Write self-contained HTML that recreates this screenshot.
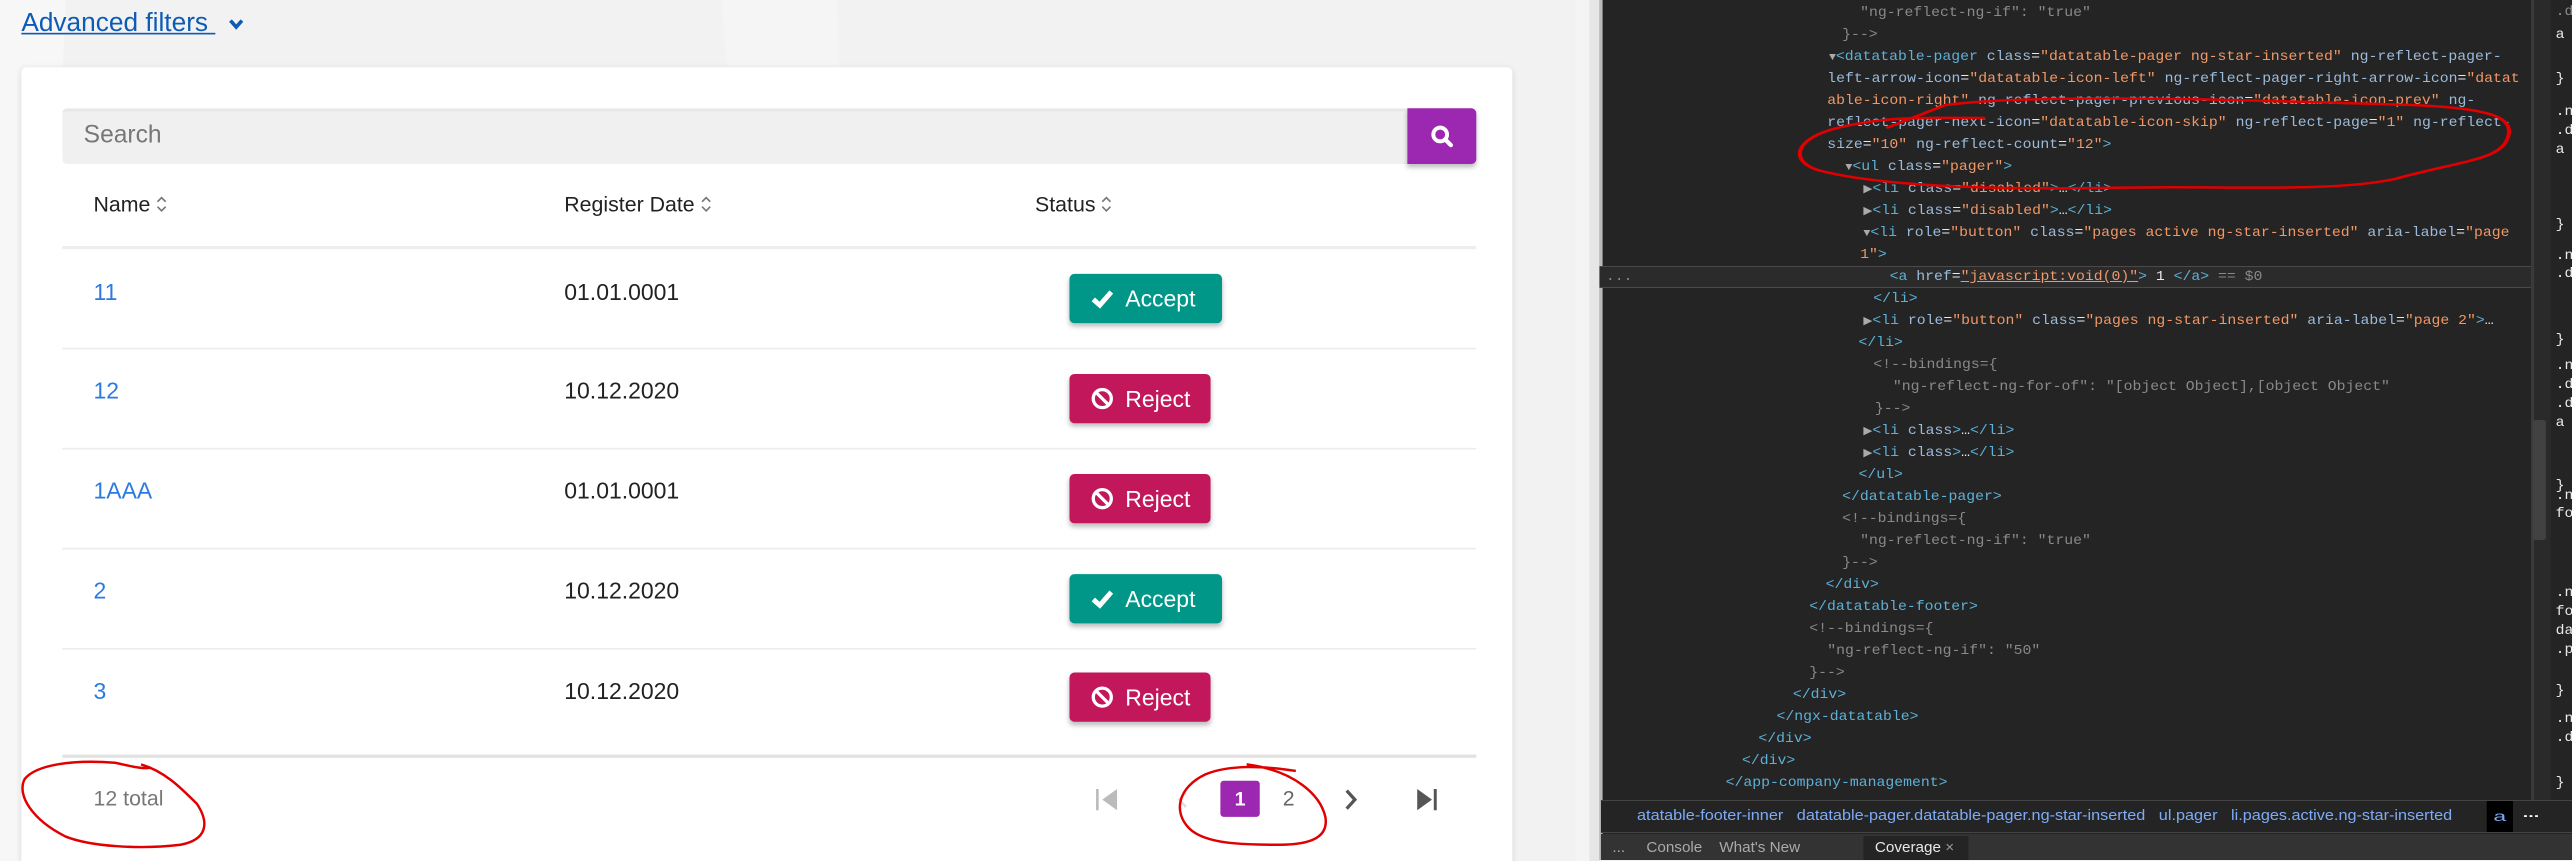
<!DOCTYPE html>
<html><head><meta charset="utf-8">
<style>
*{margin:0;padding:0;box-sizing:border-box}
html,body{width:2572px;height:860px;overflow:hidden;background:#f2f2f2}
#m{position:absolute;left:0;top:0;width:976px;height:525px;transform:scale(1.640306);transform-origin:0 0;font-family:"Liberation Sans",sans-serif;overflow:hidden}
#w{position:absolute;left:0;top:0;width:1568px;height:860px;transform:scaleX(1.640306);transform-origin:0 0;font-family:"Liberation Sans",sans-serif;overflow:hidden;pointer-events:none}
.abs{position:absolute}
.card{left:13px;top:41px;width:909px;height:500px;background:#fff;border-radius:3px;box-shadow:0 1px 4px rgba(0,0,0,.12)}
.hd{position:absolute;top:117px;font-size:13px;color:#222;white-space:nowrap}
.nm{position:absolute;left:57px;font-size:14px;color:#2a7ae2}
.dt{position:absolute;left:344px;font-size:14px;color:#222}
.ln{position:absolute;left:38px;width:862px;height:1px;background:#ececec}
.btn{position:absolute;left:652px;height:30px;border-radius:3px;color:#fff;font-size:14px;line-height:30px;padding-left:34px;box-shadow:0 2px 3px rgba(0,0,0,.25)}
.btn svg{position:absolute;left:13px;top:8px}
.acc{width:93px;background:#009688}
.rej{width:86px;background:#c2185b}
#dev{position:absolute;left:975px;top:0;width:593px;height:860px;background:#242424;overflow:hidden}
.dl{position:absolute;height:22px;line-height:22px;font-family:"Liberation Mono",monospace;font-size:14px;color:#e8eaed;white-space:nowrap;transform:scaleX(.644);transform-origin:0 0}
.t{color:#5db0d7}.a{color:#9bbbdc}.v{color:#f29766}.c{color:#898989}.g{color:#aaa;font-size:11px}
</style></head><body>
<div id="w">
<div id="dev">
<div class="abs" style="left:0;top:0;width:2px;height:860px;background:#bbb"></div>
<div class="abs" style="left:0;top:266px;width:570px;height:22px;background:#2b2b2b;border-top:1px solid #4a4a4a;border-bottom:1px solid #4a4a4a"></div>
<div class="abs" style="left:568px;top:0;width:2px;height:800px;background:#3a3a3a"></div>
<div class="abs" style="left:570px;top:0;width:10px;height:800px;background:#2a2a2a"></div>
<div class="abs" style="left:569px;top:420px;width:8px;height:120px;background:#424242;border-radius:2px"></div>
</div>
<div class="dl" style="top:2px;left:1134px"><span class="c">"ng-reflect-ng-if": "true"</span></div>
<div class="dl" style="top:24px;left:1123px"><span class="c">}--&gt;</span></div>
<div class="dl" style="top:46px;left:1115px"><span class="g">▼</span><span class="t">&lt;datatable-pager</span> <span class="a">class</span>=<span class="v">"datatable-pager ng-star-inserted"</span> <span class="a">ng-reflect-pager-</span></div>
<div class="dl" style="top:68px;left:1114px"><span class="a">left-arrow-icon</span>=<span class="v">"datatable-icon-left"</span> <span class="a">ng-reflect-pager-right-arrow-icon</span>=<span class="v">"datat</span></div>
<div class="dl" style="top:90px;left:1114px"><span class="v">able-icon-right"</span> <span class="a">ng-reflect-pager-previous-icon</span>=<span class="v">"datatable-icon-prev"</span> <span class="a">ng-</span></div>
<div class="dl" style="top:112px;left:1114px"><span class="a">reflect-pager-next-icon</span>=<span class="v">"datatable-icon-skip"</span> <span class="a">ng-reflect-page</span>=<span class="v">"1"</span> <span class="a">ng-reflect-</span></div>
<div class="dl" style="top:134px;left:1114px"><span class="a">size</span>=<span class="v">"10"</span> <span class="a">ng-reflect-count</span>=<span class="v">"12"</span><span class="t">&gt;</span></div>
<div class="dl" style="top:156px;left:1125px"><span class="g">▼</span><span class="t">&lt;ul</span> <span class="a">class</span>=<span class="v">"pager"</span><span class="t">&gt;</span></div>
<div class="dl" style="top:178px;left:1136px"><span class="g">▶</span><span class="t">&lt;li</span> <span class="a">class</span>=<span class="v">"disabled"</span><span class="t">&gt;</span>…<span class="t">&lt;/li&gt;</span></div>
<div class="dl" style="top:200px;left:1136px"><span class="g">▶</span><span class="t">&lt;li</span> <span class="a">class</span>=<span class="v">"disabled"</span><span class="t">&gt;</span>…<span class="t">&lt;/li&gt;</span></div>
<div class="dl" style="top:222px;left:1136px"><span class="g">▼</span><span class="t">&lt;li</span> <span class="a">role</span>=<span class="v">"button"</span> <span class="a">class</span>=<span class="v">"pages active ng-star-inserted"</span> <span class="a">aria-label</span>=<span class="v">"page</span></div>
<div class="dl" style="top:244px;left:1134px"><span class="v">1"</span><span class="t">&gt;</span></div>
<div class="dl" style="top:266px;left:979px"><span class="c">...</span></div>
<div class="dl" style="top:266px;left:1152px"><span class="t">&lt;a</span> <span class="a">href</span>=<span class="v" style="text-decoration:underline">"javascript:void(0)"</span><span class="t">&gt;</span> 1 <span class="t">&lt;/a&gt;</span> <span class="c">== $0</span></div>
<div class="dl" style="top:288px;left:1142px"><span class="t">&lt;/li&gt;</span></div>
<div class="dl" style="top:310px;left:1136px"><span class="g">▶</span><span class="t">&lt;li</span> <span class="a">role</span>=<span class="v">"button"</span> <span class="a">class</span>=<span class="v">"pages ng-star-inserted"</span> <span class="a">aria-label</span>=<span class="v">"page 2"</span><span class="t">&gt;</span>…</div>
<div class="dl" style="top:332px;left:1133px"><span class="t">&lt;/li&gt;</span></div>
<div class="dl" style="top:354px;left:1142px"><span class="c">&lt;!--bindings={</span></div>
<div class="dl" style="top:376px;left:1154px"><span class="c">"ng-reflect-ng-for-of": "[object Object],[object Object"</span></div>
<div class="dl" style="top:398px;left:1143px"><span class="c">}--&gt;</span></div>
<div class="dl" style="top:420px;left:1136px"><span class="g">▶</span><span class="t">&lt;li</span> <span class="a">class</span><span class="t">&gt;</span>…<span class="t">&lt;/li&gt;</span></div>
<div class="dl" style="top:442px;left:1136px"><span class="g">▶</span><span class="t">&lt;li</span> <span class="a">class</span><span class="t">&gt;</span>…<span class="t">&lt;/li&gt;</span></div>
<div class="dl" style="top:464px;left:1133px"><span class="t">&lt;/ul&gt;</span></div>
<div class="dl" style="top:486px;left:1123px"><span class="t">&lt;/datatable-pager&gt;</span></div>
<div class="dl" style="top:508px;left:1123px"><span class="c">&lt;!--bindings={</span></div>
<div class="dl" style="top:530px;left:1134px"><span class="c">"ng-reflect-ng-if": "true"</span></div>
<div class="dl" style="top:552px;left:1123px"><span class="c">}--&gt;</span></div>
<div class="dl" style="top:574px;left:1113px"><span class="t">&lt;/div&gt;</span></div>
<div class="dl" style="top:596px;left:1103px"><span class="t">&lt;/datatable-footer&gt;</span></div>
<div class="dl" style="top:618px;left:1103px"><span class="c">&lt;!--bindings={</span></div>
<div class="dl" style="top:640px;left:1114px"><span class="c">"ng-reflect-ng-if": "50"</span></div>
<div class="dl" style="top:662px;left:1103px"><span class="c">}--&gt;</span></div>
<div class="dl" style="top:684px;left:1093px"><span class="t">&lt;/div&gt;</span></div>
<div class="dl" style="top:706px;left:1083px"><span class="t">&lt;/ngx-datatable&gt;</span></div>
<div class="dl" style="top:728px;left:1072px"><span class="t">&lt;/div&gt;</span></div>
<div class="dl" style="top:750px;left:1062px"><span class="t">&lt;/div&gt;</span></div>
<div class="dl" style="top:772px;left:1052px"><span class="t">&lt;/app-company-management&gt;</span></div>
<div class="dl" style="top:1px;left:1558px"><span class="c">.da</span></div>
<div class="dl" style="top:24px;left:1558px">a {</div>
<div class="dl" style="top:68px;left:1558px">}</div>
<div class="dl" style="top:101px;left:1558px">.ng</div><div class="dl" style="top:120px;left:1558px">.da</div><div class="dl" style="top:139px;left:1558px">a {</div>
<div class="dl" style="top:214px;left:1558px">}</div>
<div class="dl" style="top:245px;left:1558px">.ng</div><div class="dl" style="top:263px;left:1558px">.da</div>
<div class="dl" style="top:329px;left:1558px">}</div>
<div class="dl" style="top:355px;left:1558px">.ng</div><div class="dl" style="top:374px;left:1558px">.da</div><div class="dl" style="top:393px;left:1558px">.da</div><div class="dl" style="top:412px;left:1558px">a {</div>
<div class="dl" style="top:475px;left:1558px">}</div>
<div class="dl" style="top:485px;left:1558px">.ng</div><div class="dl" style="top:503px;left:1558px">foo</div>
<div class="dl" style="top:582px;left:1558px">.ng</div><div class="dl" style="top:601px;left:1558px">foo</div><div class="dl" style="top:620px;left:1558px">dat</div><div class="dl" style="top:639px;left:1558px">.pa</div>
<div class="dl" style="top:680px;left:1558px">}</div>
<div class="dl" style="top:708px;left:1558px">.ng</div><div class="dl" style="top:727px;left:1558px">.da</div>
<div class="dl" style="top:772px;left:1558px">}</div>
<div class="abs" style="left:976px;top:800px;width:592px;height:33px;background:#242424;border-top:1px solid #444;border-bottom:1px solid #444"></div>
<div class="abs" style="left:998px;top:805px;height:22px;line-height:22px;font-size:15px;color:#7cacf8;white-space:nowrap;transform:scaleX(.66);transform-origin:0 0">atatable-footer-inner&nbsp;&nbsp;&nbsp;datatable-pager.datatable-pager.ng-star-inserted&nbsp;&nbsp;&nbsp;ul.pager&nbsp;&nbsp;&nbsp;li.pages.active.ng-star-inserted</div>
<div class="abs" style="left:1516px;top:801px;width:16px;height:31px;background:#000;color:#7cacf8;font-size:14px;line-height:31px;text-align:center">a</div>
<div class="abs" style="left:1538px;top:806px;color:#fff;font-size:12px;font-weight:bold">...</div>
<div class="abs" style="left:976px;top:834px;width:592px;height:26px;background:#333"></div>
<div class="abs" style="left:1136px;top:836px;width:64px;height:24px;background:#242424"></div>
<div class="abs" style="left:983px;top:839px;font-size:15px;color:#aaa;white-space:nowrap;transform:scaleX(.62);transform-origin:0 0">...&nbsp;&nbsp;&nbsp;&nbsp;&nbsp;Console&nbsp;&nbsp;&nbsp;&nbsp;What's New</div>
<div class="abs" style="left:1143px;top:839px;font-size:15px;color:#e8e8e8;white-space:nowrap;transform:scaleX(.62);transform-origin:0 0">Coverage <span style="color:#999">×</span></div>
<svg class="abs" style="left:0;top:0" width="1568" height="860"><g stroke="#e00000" stroke-width="2.5" fill="none"><path d="M1186 105 C1250 92 1400 102 1470 105 C1520 108 1535 118 1528 141 C1522 160 1500 161 1460 179 C1420 193 1350 185 1280 188 C1200 190 1140 184 1108 170 C1090 160 1095 138 1120 128 C1150 116 1170 118 1210 118"/><path d="M1186 105 L1150 128"/></g></svg>
</div>
<div id="m">
<svg class="abs" style="left:0;top:0" width="960" height="525"><path d="M0 0 L40 0 L20 525 L0 525Z" fill="#f7f7f7"/><path d="M440 0 L510 0 L530 525 L480 525Z" fill="#f5f5f5"/></svg>
<div class="abs" style="left:13px;top:6px;font-size:16px;color:#0d5bb5;text-decoration:underline">Advanced filters&nbsp;</div>
<svg class="abs" style="left:139px;top:11px" width="10" height="8"><path d="M1.5 1.5 L5 5.5 L8.5 1.5" stroke="#0d5bb5" stroke-width="2.2" fill="none"/></svg>
<div class="abs card"></div>
<div class="abs" style="left:38px;top:66px;width:820px;height:34px;background:#f0f0f0;border-radius:3px 0 0 3px;border-top:2px solid #e8e8e8"></div>
<div class="abs" style="left:51px;top:74px;font-size:15px;color:#777">Search</div>
<div class="abs" style="left:858px;top:66px;width:42px;height:34px;background:#9c27b0;border-radius:0 3px 3px 0;box-shadow:0 2px 3px rgba(0,0,0,.25)"></div>
<svg class="abs" style="left:872px;top:76px" width="14" height="14"><circle cx="6" cy="6" r="4.2" stroke="#fff" stroke-width="2.4" fill="none"/><path d="M9 9 L12.5 12.5" stroke="#fff" stroke-width="2.6" stroke-linecap="round"/></svg>
<div class="hd" style="left:57px">Name <svg width="7" height="11" style="vertical-align:-1px"><path d="M1 4 L3.5 1.5 L6 4 M1 7 L3.5 9.5 L6 7" stroke="#777" fill="none"/></svg></div>
<div class="hd" style="left:344px">Register Date <svg width="7" height="11" style="vertical-align:-1px"><path d="M1 4 L3.5 1.5 L6 4 M1 7 L3.5 9.5 L6 7" stroke="#777" fill="none"/></svg></div>
<div class="hd" style="left:631px">Status <svg width="7" height="11" style="vertical-align:-1px"><path d="M1 4 L3.5 1.5 L6 4 M1 7 L3.5 9.5 L6 7" stroke="#777" fill="none"/></svg></div>
<div class="ln" style="top:150px;height:2px;background:#eee"></div>
<div class="nm" style="top:170px">11</div><div class="dt" style="top:170px">01.01.0001</div>
<div class="ln" style="top:212px"></div>
<div class="nm" style="top:230px">12</div><div class="dt" style="top:230px">10.12.2020</div>
<div class="ln" style="top:273px"></div>
<div class="nm" style="top:291px">1AAA</div><div class="dt" style="top:291px">01.01.0001</div>
<div class="ln" style="top:334px"></div>
<div class="nm" style="top:352px">2</div><div class="dt" style="top:352px">10.12.2020</div>
<div class="ln" style="top:395px"></div>
<div class="nm" style="top:413px">3</div><div class="dt" style="top:413px">10.12.2020</div>
<div class="ln" style="top:460px;height:2px;background:#e2e2e2"></div>
<div class="btn acc" style="top:167px"><svg width="14" height="14"><path d="M1.5 7.5 L5.5 11 L12.5 3" stroke="#fff" stroke-width="3" fill="none"/></svg>Accept</div>
<div class="btn rej" style="top:228px"><svg width="14" height="14"><circle cx="7" cy="7" r="5.5" stroke="#fff" stroke-width="2" fill="none"/><path d="M3.2 3.2 L10.8 10.8" stroke="#fff" stroke-width="2"/></svg>Reject</div>
<div class="btn rej" style="top:289px"><svg width="14" height="14"><circle cx="7" cy="7" r="5.5" stroke="#fff" stroke-width="2" fill="none"/><path d="M3.2 3.2 L10.8 10.8" stroke="#fff" stroke-width="2"/></svg>Reject</div>
<div class="btn acc" style="top:350px"><svg width="14" height="14"><path d="M1.5 7.5 L5.5 11 L12.5 3" stroke="#fff" stroke-width="3" fill="none"/></svg>Accept</div>
<div class="btn rej" style="top:410px"><svg width="14" height="14"><circle cx="7" cy="7" r="5.5" stroke="#fff" stroke-width="2" fill="none"/><path d="M3.2 3.2 L10.8 10.8" stroke="#fff" stroke-width="2"/></svg>Reject</div>
<div class="abs" style="left:57px;top:479px;font-size:13px;color:#777">12 total</div>
<svg class="abs" style="left:665px;top:478px" width="220" height="20"><path d="M4 3 V16" stroke="#bbb" stroke-width="1.6"/><path d="M16 3 L7 9.5 L16 16Z" fill="#bbb"/><path d="M58 5 L54 9.5 L58 14" stroke="#ddd" stroke-width="1.5" fill="none"/><path d="M156 4 L161 9.5 L156 15" stroke="#555" stroke-width="2" fill="none"/><path d="M199 3 L208 9.5 L199 16Z" fill="#555"/><path d="M210 3 V16" stroke="#555" stroke-width="1.8"/></svg>
<div class="abs" style="left:744px;top:476px;width:24px;height:22px;background:#9c27b0;border-radius:2px;color:#fff;font-size:12px;font-weight:bold;text-align:center;line-height:22px">1</div>
<div class="abs" style="left:782px;top:479px;font-size:13px;color:#666">2</div>
<div class="abs" style="left:960px;top:0;width:15px;height:525px;background:#e6e6e6;border-left:9px solid #f4f4f4"></div>
<svg class="abs" style="left:0;top:0" width="960" height="525"><g stroke="#e00000" stroke-width="1.5" fill="none"><path d="M86 466 C100 470 110 480 120 490 C128 502 126 512 110 515 C85 518 55 516 40 510 C20 500 10 485 15 475 C22 466 45 463 70 465 C80 467 86 469 92 468"/><path d="M760 466 C790 470 805 485 808 498 C810 510 800 515 780 515 C760 515 735 515 725 505 C715 495 718 480 735 472 C750 466 770 467 790 470"/></g></svg>
</div>
</body></html>
